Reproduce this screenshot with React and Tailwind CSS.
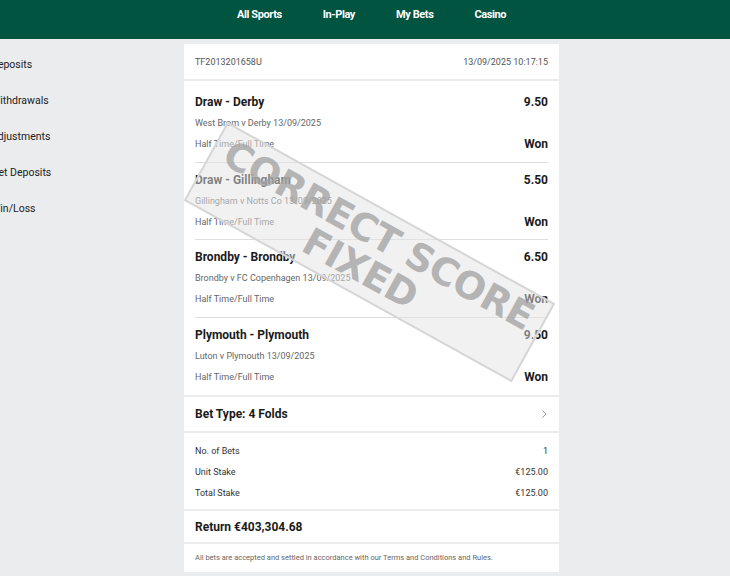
const legs = [
  { title: 'Draw - Derby', odds: '9.50', event: 'West Brom v Derby 13/09/2025' },
  { title: 'Draw - Gillingham', odds: '5.50', event: 'Gillingham v Notts Co 13/09/2025' },
  { title: 'Brondby - Brondby', odds: '6.50', event: 'Brondby v FC Copenhagen 13/09/2025' },
  { title: 'Plymouth - Plymouth', odds: '9.50', event: 'Luton v Plymouth 13/09/2025' },
];

const sideLinks = ['Deposits', 'Withdrawals', 'Adjustments', 'Net Deposits', 'Win/Loss'];

const navItems = ['All Sports', 'In-Play', 'My Bets', 'Casino'];

const Stamp = () => (
  <div className="pointer-events-none absolute left-[-2px] top-[163px] flex h-[90px] w-[375px] rotate-[29deg] flex-col items-center justify-center border-2 border-[#d6d6d6] bg-[#e4e4e4]/50 font-['DejaVu_Sans',sans-serif]">
    <span className="text-[38px] font-bold leading-[38px] tracking-[-0.5px] text-[#a0a0a0]/75">CORRECT SCORE</span>
    <span className="text-[38px] font-bold leading-[38px] tracking-[-0.5px] text-[#a0a0a0]/75">FIXED</span>
  </div>
);

export default function App() {
  return (
    <div className="min-h-screen bg-[#ebecee] font-['Roboto',sans-serif] text-[#1b1b1b]">
      {/* top nav */}
      <header className="flex h-[39px] items-start justify-center bg-[#005440] pl-[13px] pt-[7px]">
        <nav className="flex gap-[41px] text-[11px] font-bold tracking-[-0.4px] text-white">
          {navItems.map((item) => (
            <span key={item}>{item}</span>
          ))}
        </nav>
      </header>

      <div className="flex pt-[5px]">
        {/* sidebar, cut off on the left */}
        <aside className="w-[184px] shrink-0 overflow-hidden">
          <ul className="-ml-[9px] flex flex-col gap-[19px] pt-[12px] text-[10.5px] leading-[17px] text-[#222]">
            {sideLinks.map((link) => (
              <li key={link}>{link}</li>
            ))}
          </ul>
        </aside>

        {/* bet receipt */}
        <main className="relative flex w-[375px] flex-col gap-[2px] overflow-hidden bg-[#ebecee]">
          <div className="flex h-[35px] items-center justify-between bg-white px-[11px] pt-[3px] text-[9px] text-[#555]">
            <span>TF2013201658U</span>
            <span>13/09/2025 10:17:15</span>
          </div>

          <div className="bg-white px-[11px] pt-[4px]">
            {legs.map((leg, i) => (
              <div
                key={leg.title}
                className={`flex h-[77.5px] flex-col justify-center gap-[5px] ${i < legs.length - 1 ? 'border-b border-[#dedede]' : ''}`}
              >
                <div className="flex items-center justify-between text-[12px] font-bold leading-[16px]">
                  <span>{leg.title}</span>
                  <span>{leg.odds}</span>
                </div>
                <div className="text-[9px] leading-[16px] text-[#666]">{leg.event}</div>
                <div className="flex items-center justify-between leading-[16px]">
                  <span className="text-[9px] text-[#666]">Half Time/Full Time</span>
                  <span className="text-[12px] font-bold">Won</span>
                </div>
              </div>
            ))}
          </div>

          <div className="flex h-[34px] items-center justify-between bg-white px-[11px]">
            <span className="text-[12px] font-bold">Bet Type: 4 Folds</span>
            <svg width="7" height="10" viewBox="0 0 7 10" fill="none" stroke="#9a9a9a" strokeWidth="1">
              <path d="M1.5 1.5l3.5 3.5-3.5 3.5" />
            </svg>
          </div>

          <div className="flex flex-col gap-[5px] bg-white px-[11px] pb-[8px] pt-[10px] text-[9px] leading-[16px] text-[#333]">
            <div className="flex justify-between">
              <span>No. of Bets</span>
              <span>1</span>
            </div>
            <div className="flex justify-between">
              <span>Unit Stake</span>
              <span>€125.00</span>
            </div>
            <div className="flex justify-between">
              <span>Total Stake</span>
              <span>€125.00</span>
            </div>
          </div>

          <div className="flex h-[31px] items-center bg-white px-[11px] text-[12px] font-bold">
            Return €403,304.68
          </div>

          <div className="flex h-[28px] items-center bg-white px-[11px] text-[7.5px] text-[#666]">
            All bets are accepted and settled in accordance with our Terms and Conditions and Rules.
          </div>

          <Stamp />
        </main>
      </div>
    </div>
  );
}
